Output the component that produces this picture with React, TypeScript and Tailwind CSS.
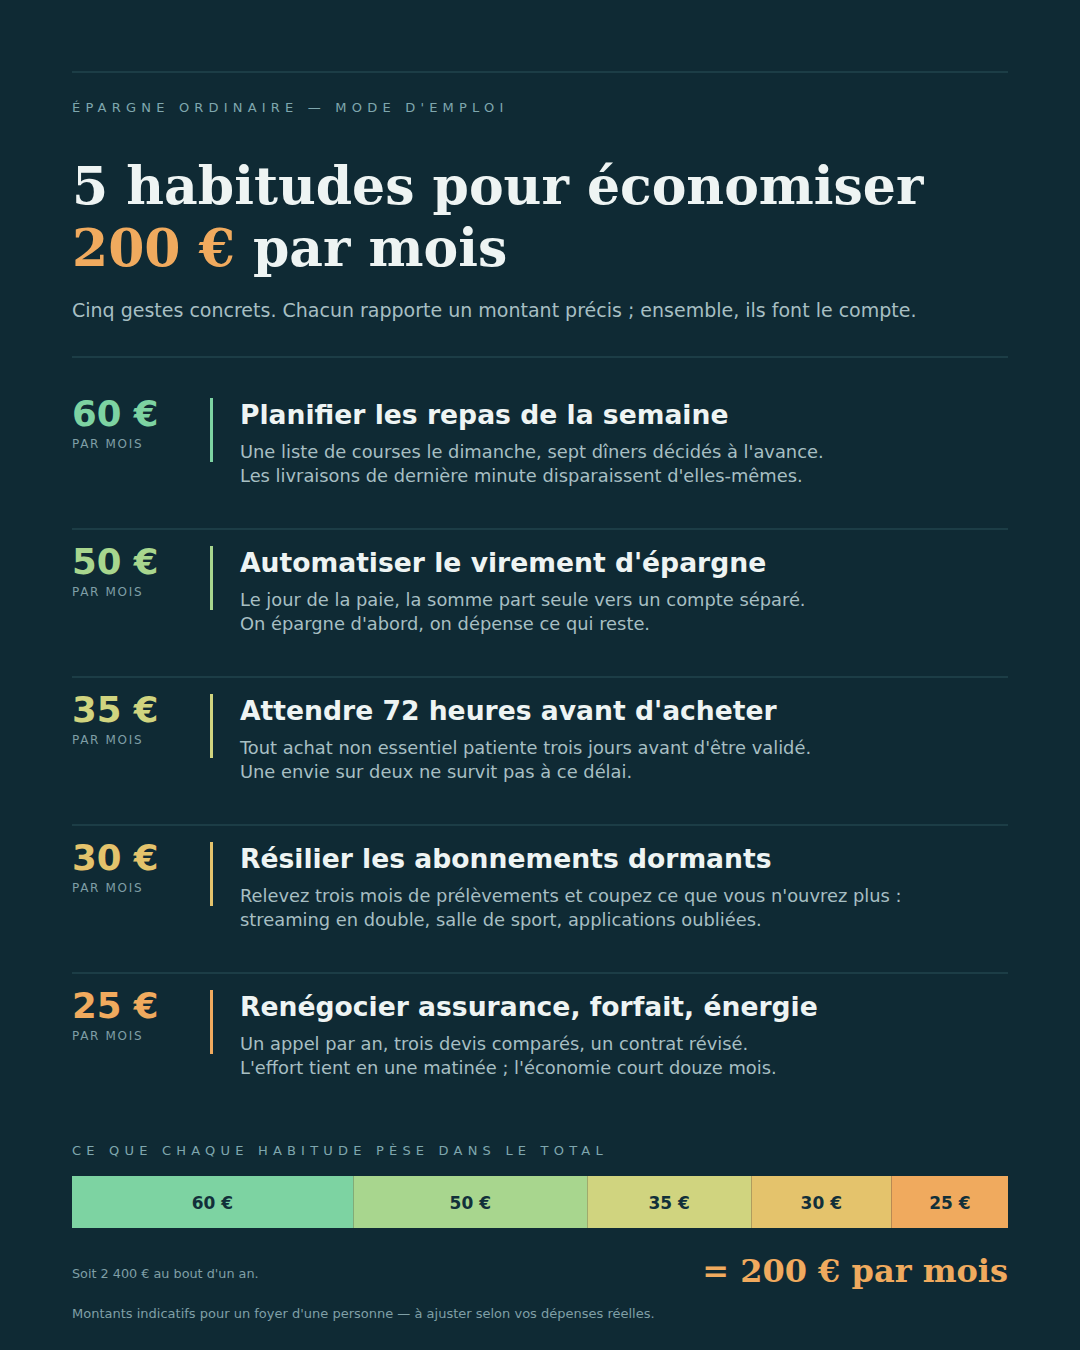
import React from 'react';

interface Habit {
    amount: number;
    color: string;
    barColor: string;
    title: string;
    lines: string[];
}

const habits: Habit[] = [
    {
        amount: 60,
        color: 'text-[#7dd3a2]',
        barColor: 'bg-[#7dd3a2]',
        title: 'Planifier les repas de la semaine',
        lines: [
            "Une liste de courses le dimanche, sept dîners décidés à l'avance.",
            "Les livraisons de dernière minute disparaissent d'elles-mêmes.",
        ],
    },
    {
        amount: 50,
        color: 'text-[#a8d68e]',
        barColor: 'bg-[#a8d68e]',
        title: "Automatiser le virement d'épargne",
        lines: [
            'Le jour de la paie, la somme part seule vers un compte séparé.',
            "On épargne d'abord, on dépense ce qui reste.",
        ],
    },
    {
        amount: 35,
        color: 'text-[#d0d47f]',
        barColor: 'bg-[#d0d47f]',
        title: "Attendre 72 heures avant d'acheter",
        lines: [
            "Tout achat non essentiel patiente trois jours avant d'être validé.",
            'Une envie sur deux ne survit pas à ce délai.',
        ],
    },
    {
        amount: 30,
        color: 'text-[#e4c36c]',
        barColor: 'bg-[#e4c36c]',
        title: 'Résilier les abonnements dormants',
        lines: [
            "Relevez trois mois de prélèvements et coupez ce que vous n'ouvrez plus :",
            'streaming en double, salle de sport, applications oubliées.',
        ],
    },
    {
        amount: 25,
        color: 'text-[#f0aa5e]',
        barColor: 'bg-[#f0aa5e]',
        title: 'Renégocier assurance, forfait, énergie',
        lines: [
            'Un appel par an, trois devis comparés, un contrat révisé.',
            "L'effort tient en une matinée ; l'économie court douze mois.",
        ],
    },
];

const total = habits.reduce((sum, h) => sum + h.amount, 0);

const HabitRow: React.FC<{ habit: Habit; first: boolean }> = ({ habit, first }) => (
    <div className={`flex pt-[14px] ${first ? 'h-[146px]' : 'h-[148px] border-t-2 border-[#1c3d46]'}`}>
        <div className="w-[138px] shrink-0">
            <div className={`text-[35.5px] font-bold leading-[36px] ${habit.color}`}>{habit.amount} €</div>
            <div className="mt-[3px] text-[12px] tracking-[0.14em] text-[#7f9fa6]">PAR MOIS</div>
        </div>
        <div className={`w-[3px] h-[64px] mt-[2px] shrink-0 ${habit.barColor}`} />
        <div className="pl-[27px] pt-[2px]">
            <div className="text-[26.6px] font-bold leading-[34px] text-[#eef4f3]">{habit.title}</div>
            <div className="mt-[8px] text-[17.85px] leading-[24px] text-[#a7bfc3]">
                {habit.lines.map((line) => (
                    <div key={line}>{line}</div>
                ))}
            </div>
        </div>
    </div>
);

export default function App() {
    return (
        <div
            className="w-[1080px] h-[1350px] bg-[#0f2a34] px-[72px] pt-[71px]"
            style={{ fontFamily: '"DejaVu Sans", sans-serif' }}
        >
            <div className="border-t-2 border-[#1c3d46]" />
            <div className="mt-[26px] text-[13px] leading-[18px] tracking-[0.4em] text-[#7fa7ae]">
                ÉPARGNE ORDINAIRE — MODE D'EMPLOI
            </div>
            <h1
                className="mt-[38px] text-[52px] font-bold leading-[62px] text-[#eef4f3]"
                style={{ fontFamily: '"DejaVu Serif", serif' }}
            >
                5 habitudes pour économiser
                <br />
                <span className="text-[#f0aa5e]">200 €</span> par mois
            </h1>
            <p className="mt-[18px] text-[19px] leading-[26px] text-[#a7bfc3]">
                Cinq gestes concrets. Chacun rapporte un montant précis ; ensemble, ils font le compte.
            </p>
            <div className="mt-[33px] border-t-2 border-[#1c3d46]" />

            <div className="mt-[24px]">
                {habits.map((h, i) => (
                    <HabitRow key={h.title} habit={h} first={i === 0} />
                ))}
            </div>

            <div className="mt-[22px] text-[13px] leading-[18px] tracking-[0.4em] text-[#7fa7ae]">
                CE QUE CHAQUE HABITUDE PÈSE DANS LE TOTAL
            </div>
            <div className="mt-[16px] flex h-[52px]">
                {habits.map((h, i) => (
                    <div
                        key={h.amount}
                        className={`flex items-center justify-center pt-[3px] text-[17px] font-bold text-[#12303a] ${h.barColor} ${
                            i > 0 ? 'border-l border-[#0f2a34]/25' : ''
                        }`}
                        style={{ width: `${(h.amount / total) * 100}%` }}
                    >
                        {h.amount} €
                    </div>
                ))}
            </div>

            <div className="mt-[20px] flex h-[44px] items-center justify-between">
                <div className="pt-[8px] text-[12.8px] text-[#7f9fa6]">Soit 2 400 € au bout d'un an.</div>
                <div
                    className="pt-[2px] text-[32px] font-bold leading-[44px] text-[#f0aa5e]"
                    style={{ fontFamily: '"DejaVu Serif", serif' }}
                >
                    = 200 € par mois
                </div>
            </div>
            <div className="mt-[12px] text-[13px] leading-[20px] text-[#7f9fa6]">
                Montants indicatifs pour un foyer d'une personne — à ajuster selon vos dépenses réelles.
            </div>
        </div>
    );
}
